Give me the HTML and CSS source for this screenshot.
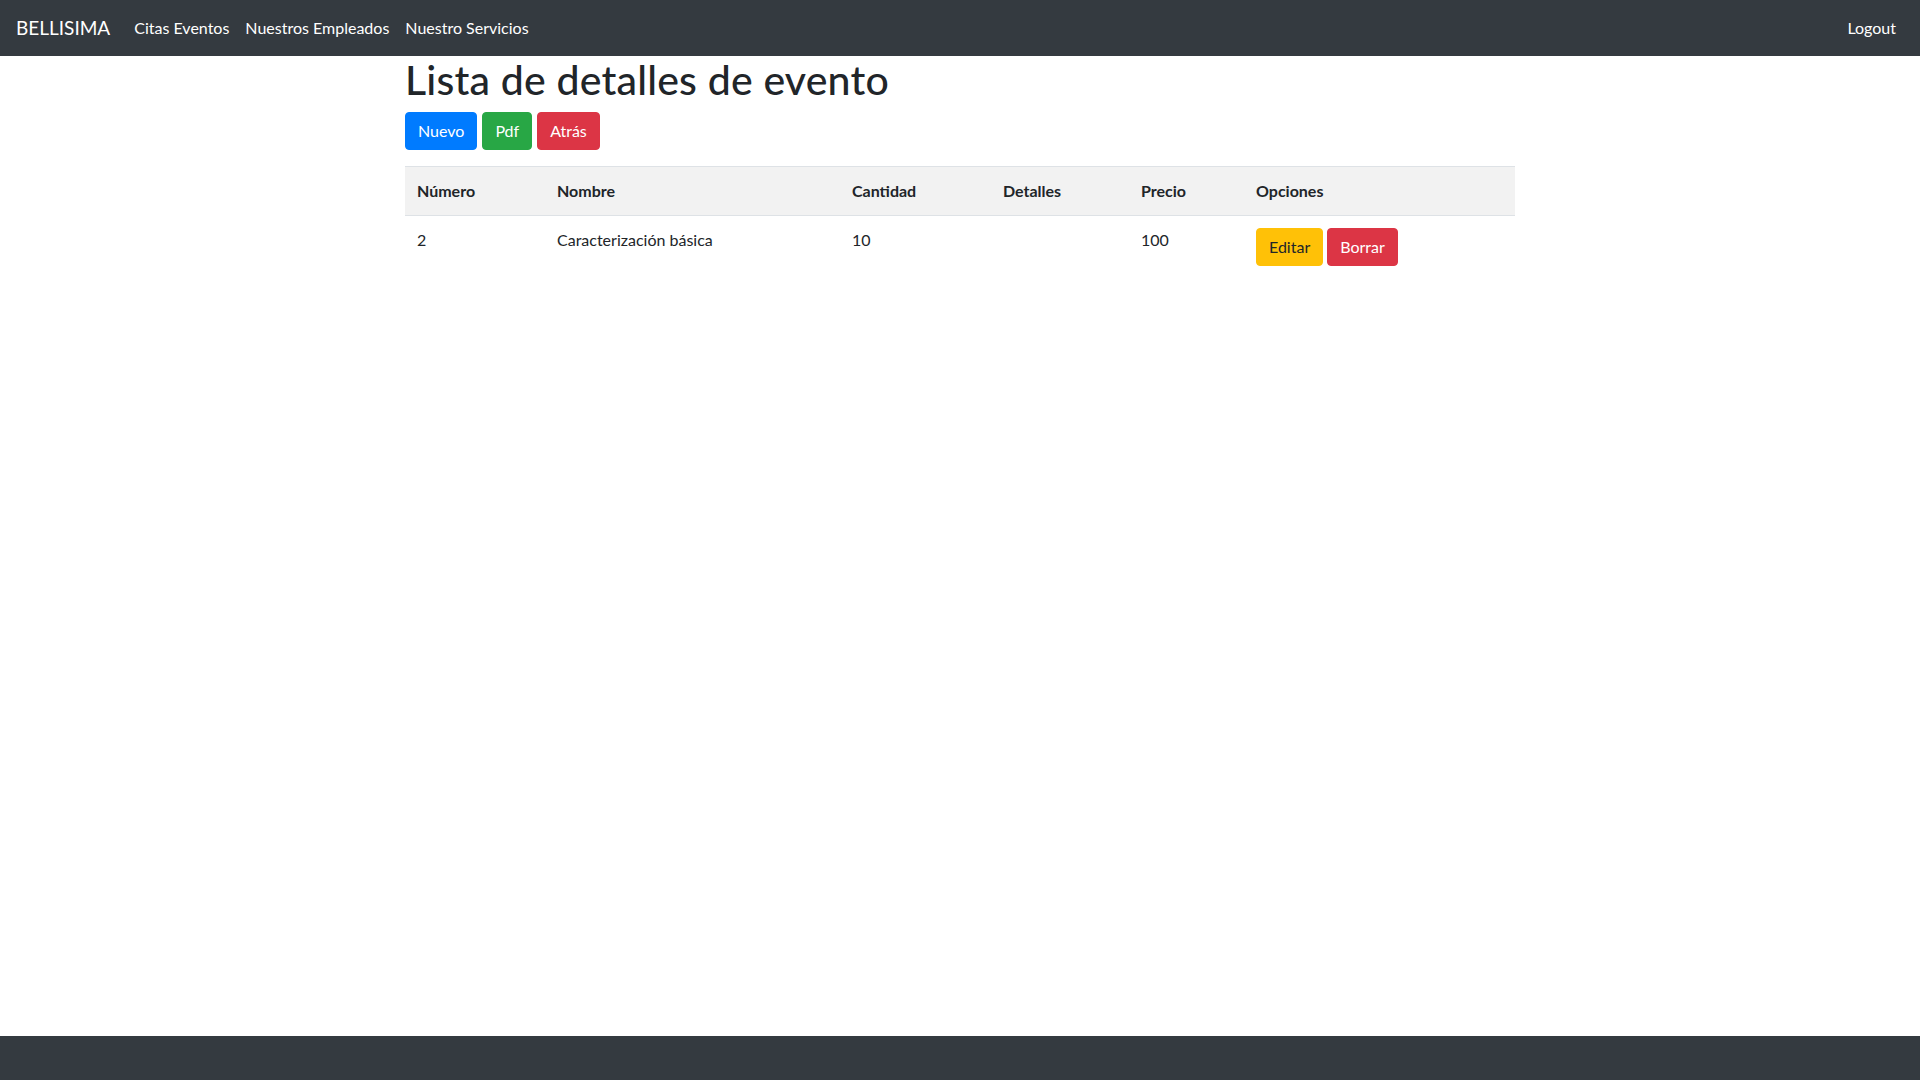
FILE: index.html
```html
<!DOCTYPE html>
<html lang="es">
<head>
<meta charset="utf-8">
<title>Lista de detalles de evento</title>
<link rel="stylesheet" href="styles.css">
</head>
<body>
<nav class="navbar">
  <a class="brand" href="#">BELLISIMA</a>
  <ul class="nav">
    <li><a class="nav-link" href="#">Citas Eventos</a></li>
    <li><a class="nav-link" href="#">Nuestros Empleados</a></li>
    <li><a class="nav-link" href="#">Nuestro Servicios</a></li>
  </ul>
  <a class="nav-link logout" href="#">Logout</a>
</nav>
<main class="container">
  <h1 class="title">Lista de detalles de evento</h1>
  <div class="actions">
    <a class="btn btn-primary" href="#">Nuevo</a>
    <a class="btn btn-success" href="#">Pdf</a>
    <a class="btn btn-danger" href="#">Atrás</a>
  </div>
  <table class="table">
    <thead>
      <tr>
        <th class="c-num">Número</th>
        <th class="c-name">Nombre</th>
        <th class="c-qty">Cantidad</th>
        <th class="c-det">Detalles</th>
        <th class="c-price">Precio</th>
        <th class="c-opt">Opciones</th>
      </tr>
    </thead>
    <tbody>
      <tr>
        <td>2</td>
        <td>Caracterización básica</td>
        <td>10</td>
        <td></td>
        <td>100</td>
        <td class="opts">
          <a class="btn btn-warning" href="#">Editar</a>
          <a class="btn btn-danger" href="#">Borrar</a>
        </td>
      </tr>
    </tbody>
  </table>
</main>
<footer class="footer"></footer>
</body>
</html>
```
FILE: styles.css
```css
* { box-sizing: border-box; }
html, body { margin: 0; padding: 0; }
body {
  font-family: Lato, "Open Sans", "Noto Sans", sans-serif;
  font-size: 16px;
  line-height: 1.5;
  color: #212529;
  background: #fff;
  min-height: 100vh;
  display: flex;
  flex-direction: column;
}
a { text-decoration: none; }

.navbar {
  background: #343a40;
  height: 56px;
  padding: 8px 16px;
  display: flex;
  align-items: center;
}
.brand {
  color: #fff;
  font-size: 19px;
  line-height: 30px;
  margin-right: 16px;
  padding: 5px 0;
}
.nav {
  list-style: none;
  margin: 0;
  padding: 0;
  display: flex;
}
.nav-link {
  display: block;
  color: #fff;
  padding: 8px;
  line-height: 24px;
}
.logout { margin-left: auto; }

.container {
  width: 1140px;
  margin: 0 auto;
  padding: 0 15px;
}
.title {
  font-size: 41px;
  font-weight: 500;
  line-height: 48px;
  letter-spacing: 0.2px;
  margin: 0 0 8px;
}
.actions {
  display: flex;
  gap: 5px;
  margin-bottom: 16px;
}
.btn {
  display: inline-block;
  padding: 6px 12px;
  border: 1px solid transparent;
  border-radius: 4px;
  font-size: 16px;
  line-height: 24px;
  color: #fff;
}
.btn-primary { background: #007bff; border-color: #007bff; }
.btn-success { background: #28a745; border-color: #28a745; }
.btn-danger { background: #dc3545; border-color: #dc3545; }
.btn-warning { background: #ffc107; border-color: #ffc107; color: #212529; }

.table {
  width: 100%;
  border-collapse: collapse;
  table-layout: fixed;
}
.table th, .table td {
  padding: 12px;
  text-align: left;
  vertical-align: top;
}
.table thead th {
  background: #f2f2f2;
  font-weight: 700;
  border-top: 1px solid #dee2e6;
  border-bottom: 1px solid #dee2e6;
}
.c-num { width: 140px; }
.c-name { width: 295px; }
.c-qty { width: 151px; }
.c-det { width: 138px; }
.c-price { width: 115px; }
.c-opt { width: auto; }
.opts { display: flex; gap: 4px; }

.footer {
  margin-top: auto;
  height: 44px;
  background: #343a40;
}
```
